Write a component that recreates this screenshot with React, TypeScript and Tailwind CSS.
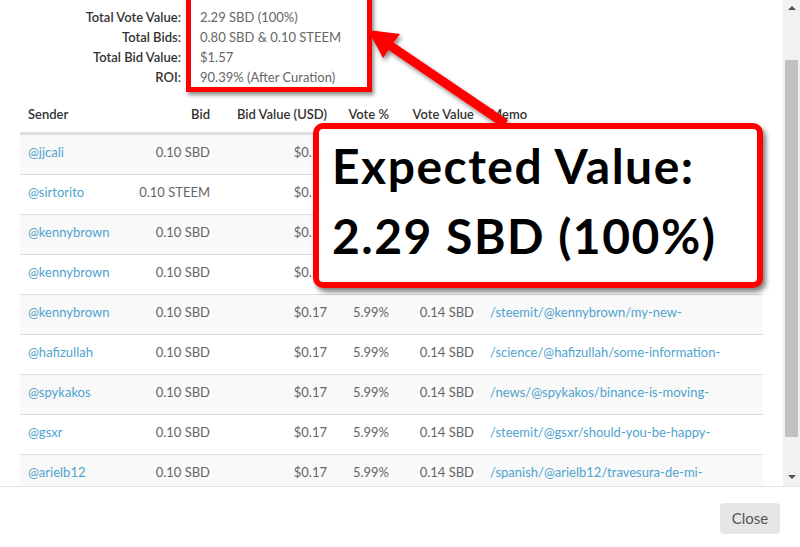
import React from "react";

const summary = [
  ["Total Vote Value:", "2.29 SBD (100%)"],
  ["Total Bids:", "0.80 SBD & 0.10 STEEM"],
  ["Total Bid Value:", "$1.57"],
  ["ROI:", "90.39% (After Curation)"],
];

const bids = [
  { sender: "@jjcali", bid: "0.10 SBD", usd: "$0.17", pct: "5.99%", value: "0.14 SBD", memo: "/steemit/@jjcali/" },
  { sender: "@sirtorito", bid: "0.10 STEEM", usd: "$0.14", pct: "4.98%", value: "0.11 SBD", memo: "/life/@sirtorito/" },
  { sender: "@kennybrown", bid: "0.10 SBD", usd: "$0.17", pct: "5.99%", value: "0.14 SBD", memo: "/steemit/@kennybrown/" },
  { sender: "@kennybrown", bid: "0.10 SBD", usd: "$0.17", pct: "5.99%", value: "0.14 SBD", memo: "/steemit/@kennybrown/" },
  { sender: "@kennybrown", bid: "0.10 SBD", usd: "$0.17", pct: "5.99%", value: "0.14 SBD", memo: "/steemit/@kennybrown/my-new-" },
  { sender: "@hafizullah", bid: "0.10 SBD", usd: "$0.17", pct: "5.99%", value: "0.14 SBD", memo: "/science/@hafizullah/some-information-" },
  { sender: "@spykakos", bid: "0.10 SBD", usd: "$0.17", pct: "5.99%", value: "0.14 SBD", memo: "/news/@spykakos/binance-is-moving-" },
  { sender: "@gsxr", bid: "0.10 SBD", usd: "$0.17", pct: "5.99%", value: "0.14 SBD", memo: "/steemit/@gsxr/should-you-be-happy-" },
  { sender: "@arielb12", bid: "0.10 SBD", usd: "$0.17", pct: "5.99%", value: "0.14 SBD", memo: "/spanish/@arielb12/travesura-de-mi-" },
];

const cols = "grid grid-cols-[110px_88px_117px_62px_85px_1fr]";

function Scrollbar() {
  return (
    <div className="relative w-[17px] h-full bg-[#f1f1f1] shrink-0">
      <div className="absolute left-[5px] top-[6px] w-0 h-0 border-x-[4px] border-x-transparent border-b-[4px] border-b-[#505050]" />
      <div className="absolute left-[2px] right-[2px] top-[60px] h-[377px] bg-[#c1c1c1]" />
      <div className="absolute left-[5px] bottom-[7px] w-0 h-0 border-x-[4px] border-x-transparent border-t-[4px] border-t-[#505050]" />
    </div>
  );
}

export default function App() {
  return (
    <div
      className="relative w-[800px] h-[547px] bg-white overflow-hidden text-[13px] text-[#666]"
      style={{ fontFamily: "Lato, 'Liberation Sans', sans-serif" }}
    >
      <div className="flex h-[487px] border-b border-[#e5e5e5]">
        <div className="flex-1 overflow-hidden px-5 pt-[7px]">
          <div className="flex flex-col">
            {summary.map(([label, value]) => (
              <div key={label} className="flex leading-5">
                <div className="w-[161px] text-right text-[#333] font-semibold">{label}</div>
                <div className="pl-[19px]">{value}</div>
              </div>
            ))}
          </div>

          <div className="mt-[10px]">
            <div className={`${cols} h-[37px] items-center border-b-2 border-[#ddd] text-[#333] font-semibold`}>
              <div className="px-2">Sender</div>
              <div className="px-2 text-right">Bid</div>
              <div className="px-2 text-right">Bid Value (USD)</div>
              <div className="px-2 text-right">Vote %</div>
              <div className="px-2 text-right">Vote Value</div>
              <div className="px-2">Memo</div>
            </div>
            {bids.map((b, i) => (
              <div
                key={i}
                className={`${cols} h-[40px] items-center border-t border-[#ddd] first:border-t-0 ${i % 2 === 0 ? "bg-[#f9f9f9]" : "bg-white"}`}
              >
                <div className="px-2 pb-[3px] text-[#4fa3cd]">{b.sender}</div>
                <div className="px-2 pb-[3px] text-right">{b.bid}</div>
                <div className="px-2 pb-[3px] text-right">{b.usd}</div>
                <div className="px-2 pb-[3px] text-right">{b.pct}</div>
                <div className="px-2 pb-[3px] text-right">{b.value}</div>
                <div className="px-2 pb-[3px] text-[#4fa3cd] whitespace-nowrap overflow-hidden">{b.memo}</div>
              </div>
            ))}
          </div>
        </div>
        <Scrollbar />
      </div>

      <div className="flex justify-end pt-[16px] pr-5">
        <button className="w-[60px] h-[31px] rounded bg-[#e6e6e6] text-[15px] text-[#555]">Close</button>
      </div>

      {/* annotation: box around the vote value */}
      <div className="absolute left-[186px] top-[-6px] w-[186px] h-[98px] border-[5px] border-[#f00] shadow-[2px_3px_4px_rgba(0,0,0,0.45)]" />

      {/* annotation: arrow */}
      <svg className="absolute left-0 top-0" width="800" height="547" viewBox="0 0 800 547">
        <defs>
          <filter id="sh" x="-20%" y="-20%" width="140%" height="140%">
            <feDropShadow dx="2" dy="3" stdDeviation="2" floodColor="#000" floodOpacity="0.45" />
          </filter>
        </defs>
        <polygon
          filter="url(#sh)"
          fill="#f00"
          points="368,30 400,34 393.5,42.5 508,120 503,128 388.5,50 383,58"
        />
      </svg>

      {/* annotation: callout */}
      <div className="absolute left-[313px] top-[123px] w-[450px] h-[165px] bg-white border-[6px] border-[#f00] rounded-[10px] shadow-[3px_4px_5px_rgba(0,0,0,0.5)] pl-[13px] pt-[2px] text-black font-bold text-[48px] leading-[70px] tracking-[1.5px]">
        <div>Expected Value:</div>
        <div>2.29 SBD (100%)</div>
      </div>
    </div>
  );
}
